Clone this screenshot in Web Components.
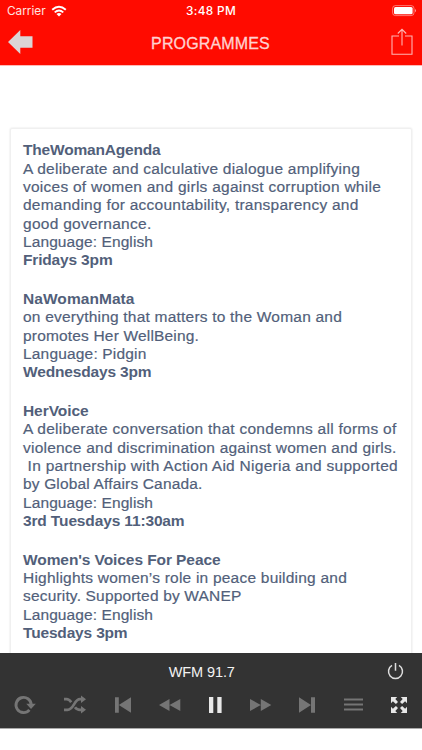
<!DOCTYPE html>
<html lang="en">
<head>
<meta charset="utf-8">
<title>Programmes</title>
<style>
    html, body { margin: 0; height: 100%; }
    body { background: #fff; overflow: hidden; font-family: "Liberation Sans", Arial, sans-serif; }
</style>
</head>
<body>
<radio-app>
    <status-bar slot="top" carrier="Carrier" time="3:48 PM"></status-bar>
    <nav-bar slot="top">PROGRAMMES</nav-bar>
    <programme-card>
        <programme-item>
            <text-line strong fit="137.5">TheWomanAgenda</text-line>
            <text-line fit="337">A deliberate and calculative dialogue amplifying</text-line>
            <text-line fit="358">voices of women and girls against corruption while</text-line>
            <text-line fit="335.5">demanding for accountability, transparency and</text-line>
            <text-line fit="128.5">good governance.</text-line>
            <text-line fit="130">Language: English</text-line>
            <text-line strong fit="89.5">Fridays 3pm</text-line>
        </programme-item>
        <programme-item>
            <text-line strong fit="111.5">NaWomanMata</text-line>
            <text-line fit="319">on everything that matters to the Woman and</text-line>
            <text-line fit="176">promotes Her WellBeing.</text-line>
            <text-line fit="123.5">Language: Pidgin</text-line>
            <text-line strong fit="128.5">Wednesdays 3pm</text-line>
        </programme-item>
        <programme-item>
            <text-line strong fit="65.5">HerVoice</text-line>
            <text-line fit="373.5">A deliberate conversation that condemns all forms of</text-line>
            <text-line fit="373.5">violence and discrimination against women and girls.</text-line>
            <text-line fit="375">&nbsp;In partnership with Action Aid Nigeria and supported</text-line>
            <text-line fit="179.5">by Global Affairs Canada.</text-line>
            <text-line fit="130">Language: English</text-line>
            <text-line strong fit="161.5">3rd Tuesdays 11:30am</text-line>
        </programme-item>
        <programme-item>
            <text-line strong fit="197.5">Women's Voices For Peace</text-line>
            <text-line fit="324">Highlights women’s role in peace building and</text-line>
            <text-line fit="218.5">security. Supported by WANEP</text-line>
            <text-line fit="130">Language: English</text-line>
            <text-line strong fit="104.5">Tuesdays 3pm</text-line>
        </programme-item>
    </programme-card>
    <player-bar slot="bottom">WFM 91.7</player-bar>
</radio-app>

<script>
const ICONS = {
    wifi: `<path d="M1.2 4.8Q8 -1.2 14.8 4.8M3.7 7.4Q8 3.7 12.3 7.4" fill="none" stroke="currentColor" stroke-width="1.9"/><path d="M5.5 9Q8 7 10.5 9L8 11.6Z"/>`,
    battery: `<rect x=".6" y=".6" width="21.4" height="10" rx="2.8" fill="none" stroke="currentColor" stroke-width=".8" opacity=".55"/><rect x="2" y="2" width="18.6" height="7.2" rx="1.5"/><path d="M23 4Q25 5.6 23 7.2Z" opacity=".6"/>`,
    back: `<path d="M0 12 12.3 0V6.3H24.5V17.7H12.3V24Z"/>`,
    share: `<path d="M8 8H1V26.2H21V8H14M11 17.5V1.5M6.8 5.5 11 1.3 15.2 5.5" fill="none" stroke="currentColor" stroke-width="1.1"/>`,
    power: `<path d="M5 3.4A7 7 0 1 0 12 3.4M8.5 1V8.8" fill="none" stroke="currentColor" stroke-width="1.5"/>`,
    reload: `<path d="M15.4 14.9A7.6 7.6 0 1 1 17.2 9.7" fill="none" stroke="currentColor" stroke-width="2.9"/><path d="M12.3 8.7H21.8L17 14Z"/>`,
    shuffle: `<path d="M0 4.2H2.5C5 4.2 6 5.5 7.2 7.2M0 14.8H3.5C10 14.8 10 4.2 16 4.2H18M11 12.2C12.3 14 13.5 14.8 16 14.8H18" fill="none" stroke="currentColor" stroke-width="2.7"/><path d="M17 .6 22 4.2 17 8ZM17 11 22 14.8 17 18.5Z"/>`,
    prev: `<path d="M0 .3H3.8V15.8H0ZM3.8 8 16 .3V15.8Z"/>`,
    rewind: `<path d="M0 6 10.5 0V12ZM10.5 6 21.3 0V12Z"/>`,
    pause: `<path d="M0 0H4.3V16H0ZM8.3 0H12.6V16H8.3Z"/>`,
    forward: `<path d="M0 0 10.8 6 0 12ZM10.8 0 21.3 6 10.8 12Z"/>`,
    next: `<path d="M0 .3 12 8 0 15.8ZM12 .3H16V15.8H12Z"/>`,
    menu: `<path d="M0 1.5H19M0 6.5H19M0 11.5H19" fill="none" stroke="currentColor" stroke-width="1.8"/>`,
    expand: `<path d="M0 0H6.2L4.3 1.9 7 4.9 4.9 7 1.9 4.3 0 6.2ZM16 0V6.2L14.1 4.3 11.1 7 9 4.9 11.7 1.9 9.8 0ZM0 16V9.8L1.9 11.7 4.9 9 7 11.1 4.3 14.1 6.2 16ZM16 16H9.8L11.7 14.1 9 11.1 11.1 9 14.1 11.7 16 9.8Z"/>`
};

function attach(element, html) {
    const root = element.attachShadow({ mode: "open" });
    root.innerHTML = html;
    return root;
}

class AppIcon extends HTMLElement {
    connectedCallback() {
        const w = this.getAttribute("w");
        const h = this.getAttribute("h");
        attach(this, `
            <style>
                :host { display: flex; flex: none; }
                svg { display: block; fill: currentColor; overflow: visible; }
            </style>
            <svg width="${w}" height="${h}" viewBox="0 0 ${w} ${h}">${ICONS[this.getAttribute("name")]}</svg>
        `);
    }
}

// One line of text, tracked so that it comes out exactly `fit` pixels wide.
class TextLine extends HTMLElement {
    connectedCallback() {
        attach(this, `
            <style>
                :host { display: block; white-space: nowrap; }
                :host([strong]) { font-weight: 700; -webkit-text-stroke: 0; }
                span { display: inline-block; }
            </style>
            <span><slot></slot></span>
        `);
        this.track();
    }
    track() {
        const fit = parseFloat(this.getAttribute("fit"));
        if (!fit) return;
        const span = this.shadowRoot.querySelector("span");
        const extra = fit - span.getBoundingClientRect().width;
        span.style.letterSpacing = `${extra / this.textContent.length}px`;
    }
}

class RadioApp extends HTMLElement {
    connectedCallback() {
        attach(this, `
            <style>
                :host { display: flex; flex-direction: column; height: 750px; background: #fff; }
                header { flex: none; height: 66px; background: #ff0b00; border-bottom: 1px solid #ffb9b5; box-sizing: border-box; }
                main { flex: 1; min-height: 0; overflow: hidden; padding: 62px 10px 0; }
                footer { flex: none; padding-bottom: 21px; }
            </style>
            <header><slot name="top"></slot></header>
            <main><slot></slot></main>
            <footer><slot name="bottom"></slot></footer>
        `);
    }
}

class StatusBar extends HTMLElement {
    connectedCallback() {
        attach(this, `
            <style>
                :host {
                    display: grid; grid-template-columns: 1fr auto 1fr; align-items: center;
                    height: 22px; padding: 0 5px 0 7px; box-sizing: border-box;
                    color: #fff; font: 11.8px/22px Inter, sans-serif;
                }
                .left { display: flex; align-items: center; gap: 5px; color: #ffe3e1; }
                .left app-icon { color: #fff; margin-top: -1px; }
                .time { font-weight: 500; letter-spacing: .35px; margin-right: 2px; }
                app-icon { justify-self: end; margin-top: -1px; }
            </style>
            <span class="left">${this.getAttribute("carrier")}<app-icon name="wifi" w="16" h="12"></app-icon></span>
            <span class="time">${this.getAttribute("time")}</span>
            <app-icon name="battery" w="25" h="11"></app-icon>
        `);
    }
}

class NavBar extends HTMLElement {
    connectedCallback() {
        attach(this, `
            <style>
                :host {
                    display: grid; grid-template-columns: 1fr auto 1fr; align-items: center;
                    height: 42px; padding: 0 9px 0 8px; box-sizing: border-box; color: #dcd5d5;
                }
                app-icon { margin-top: -2px; }
                h1 { margin: 2px 0 0; font-size: 16px; line-height: 20px; font-weight: 400; letter-spacing: .15px; color: #ffd2d0; -webkit-text-stroke: .3px; }
                .share { justify-self: end; margin-top: -4px; color: #ffb6b3; }
            </style>
            <app-icon name="back" w="25" h="24"></app-icon>
            <h1><slot></slot></h1>
            <app-icon class="share" name="share" w="22" h="27"></app-icon>
        `);
    }
}

class ProgrammeCard extends HTMLElement {
    connectedCallback() {
        attach(this, `
            <style>
                :host {
                    display: flex; flex-direction: column; gap: 20.4px;
                    min-height: 560px; padding: 12.4px 12px 12px; border: 1px solid #f0f0f0; border-radius: 2px;
                    box-sizing: border-box; box-shadow: 0 0 2px #ddd;
                }
            </style>
            <slot></slot>
        `);
    }
}

class ProgrammeItem extends HTMLElement {
    connectedCallback() {
        attach(this, `
            <style>
                :host { display: block; color: #525f7a; font-size: 15.5px; line-height: 18.33px; -webkit-text-stroke: .2px; }
            </style>
            <slot></slot>
        `);
    }
}

class PlayerBar extends HTMLElement {
    connectedCallback() {
        attach(this, `
            <style>
                :host {
                    display: flex; flex-direction: column; height: 76px; box-sizing: border-box;
                    background: #333; color: #757575; border-bottom: 1px solid #aaa;
                }
                .title { display: grid; grid-template-columns: 1fr auto 1fr; align-items: center; height: 37px; padding: 0 18.5px 0 0; color: #f2f2f2; font-size: 14.5px; letter-spacing: -.1px; }
                .title app-icon { justify-self: end; margin-top: -2px; color: #ddd; }
                .controls { display: flex; align-items: center; justify-content: space-between; height: 29px; padding: 0 15px 0 14px; }
                .on { color: #e8e8e8; }
            </style>
            <div class="title"><i></i><span><slot></slot></span><app-icon name="power" w="17" h="18"></app-icon></div>
            <div class="controls">
                <app-icon name="reload" w="22" h="19"></app-icon>
                <app-icon name="shuffle" w="22" h="19"></app-icon>
                <app-icon name="prev" w="16" h="16"></app-icon>
                <app-icon name="rewind" w="21" h="12"></app-icon>
                <app-icon class="on" name="pause" w="13" h="16"></app-icon>
                <app-icon name="forward" w="21" h="12"></app-icon>
                <app-icon name="next" w="16" h="16"></app-icon>
                <app-icon name="menu" w="19" h="13"></app-icon>
                <app-icon class="on" name="expand" w="16" h="16"></app-icon>
            </div>
        `);
    }
}

customElements.define("radio-app", RadioApp);
customElements.define("app-icon", AppIcon);
customElements.define("status-bar", StatusBar);
customElements.define("nav-bar", NavBar);
customElements.define("programme-card", ProgrammeCard);
customElements.define("programme-item", ProgrammeItem);
customElements.define("player-bar", PlayerBar);
customElements.define("text-line", TextLine);
</script>
</body>
</html>
